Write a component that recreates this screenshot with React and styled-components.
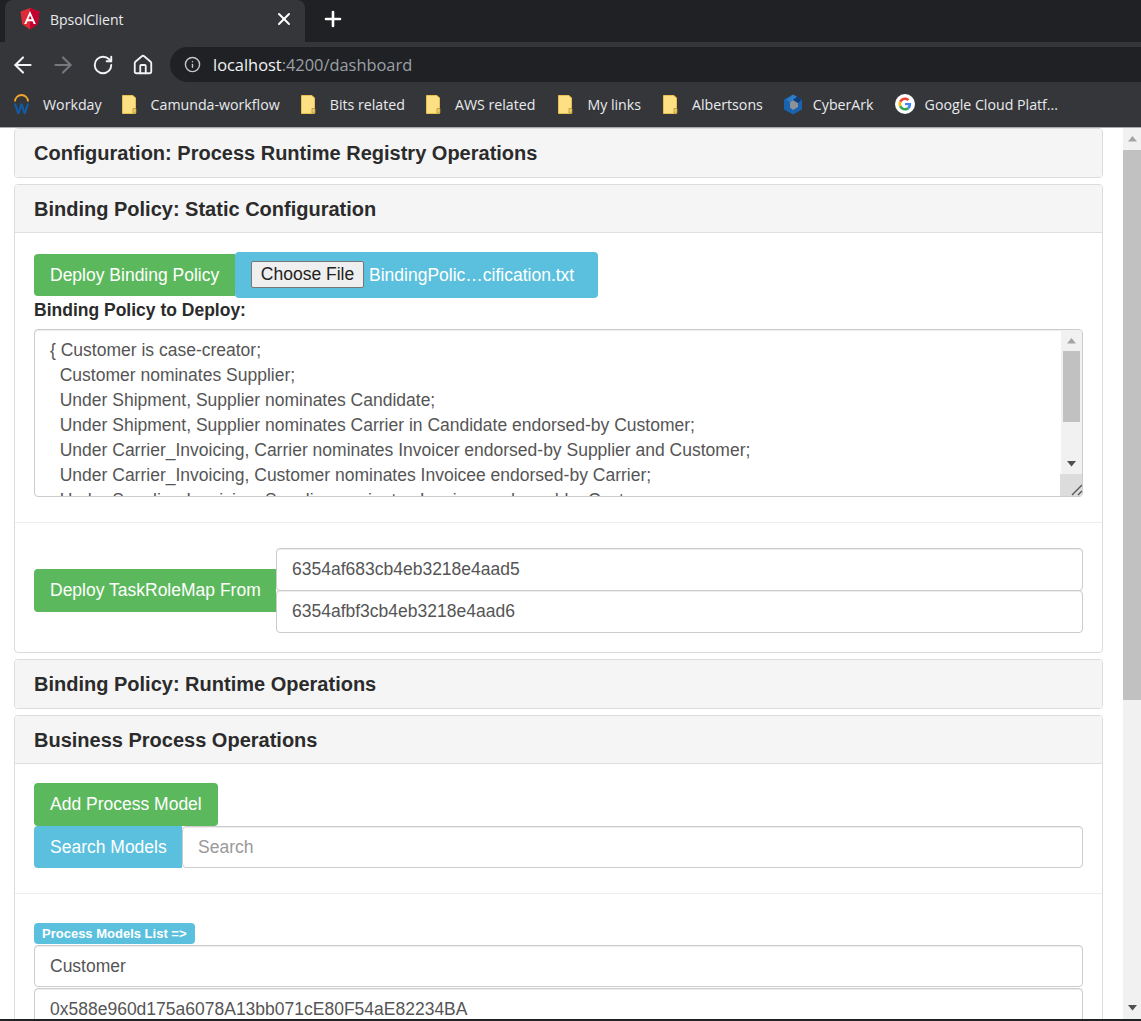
import React from 'react'
import styled, { createGlobalStyle } from 'styled-components'
import { ArrowLeft, ArrowRight, RotateCw, Home, Info, X, Plus } from 'lucide-react'

const GlobalStyle = createGlobalStyle`
    html, body {
        margin: 0;
        padding: 0;
        background: #fff;
        overflow: hidden;
    }
    * {
        box-sizing: border-box;
    }
`

const Window = styled.div`
    width: 1141px;
    height: 1021px;
    display: flex;
    flex-direction: column;
    overflow: hidden;
    font-family: "Liberation Sans", Arial, sans-serif;
    border-bottom: 2px solid #202124;
`

const TabStrip = styled.div`
    height: 42px;
    flex: none;
    background: #202124;
    display: flex;
    align-items: flex-end;
    padding-left: 5px;
`

const Tab = styled.div`
    width: 300px;
    height: 42px;
    background: #35363a;
    border-radius: 8px 8px 0 0;
    display: flex;
    align-items: center;
    padding: 0 11px 4px 15px;
    color: #e8eaed;
    font-family: "Open Sans", sans-serif;
    font-size: 14px;
`

const TabTitle = styled.span`
    flex: 1;
    margin-left: 10px;
`

const NewTab = styled.div`
    padding: 0 0 4px 16px;
    height: 42px;
    display: flex;
    align-items: center;
    color: #fff;
`

const Toolbar = styled.div`
    height: 40px;
    flex: none;
    background: #35363a;
    display: flex;
    align-items: flex-end;
    padding-left: 3px;
`

const NavButtons = styled.div`
    width: 167px;
    height: 35px;
    display: flex;
    align-items: center;
    color: #f1f3f4;
`

const NavButton = styled.div`
    width: 40px;
    display: flex;
    justify-content: center;
    color: ${props => (props.$disabled ? '#75787c' : 'inherit')};
`

const AddressBar = styled.div`
    flex: 1;
    height: 35px;
    background: #202124;
    border-radius: 18px 0 0 18px;
    display: flex;
    align-items: center;
    padding-left: 14px;
    font-family: "Open Sans", sans-serif;
    font-size: 16.4px;
    color: #9aa0a6;
`

const Host = styled.span`
    color: #f1f3f4;
    margin-left: 12px;
`

const BookmarksBar = styled.div`
    height: 46px;
    flex: none;
    background: #35363a;
    border-bottom: 1px solid #a9aaac;
    display: flex;
    align-items: center;
    padding: 0 0 1px 13px;
    font-family: "Open Sans", sans-serif;
    font-size: 14.2px;
    color: #e8eaed;
`

const Bookmark = styled.div`
    display: flex;
    align-items: center;
    gap: ${props => props.$gap || 14}px;
    margin-right: ${props => props.$right || 20}px;
    white-space: nowrap;
`

const Page = styled.div`
    flex: 1;
    min-height: 0;
    display: flex;
    background: #fff;
`

const Content = styled.div`
    flex: 1;
    min-width: 0;
    overflow: hidden;
    padding: 0 20px 0 14px;
`

const Scrollbar = styled.div`
    flex: none;
    width: ${props => props.$width}px;
    background: #f1f1f1;
    display: flex;
    flex-direction: column;
    align-items: stretch;
`

const ScrollArrow = styled.div`
    height: ${props => props.$size}px;
    flex: none;
    display: flex;
    align-items: center;
    justify-content: center;
`

const ScrollThumb = styled.div`
    background: #c1c1c1;
    height: ${props => props.$height}px;
    flex: none;
    margin: 0 ${props => props.$inset || 0}px;
`

const ScrollTrack = styled.div`
    flex: 1;
`

const Card = styled.section`
    border: 1px solid #dcdcdc;
    border-radius: 4px;
    margin-bottom: 6px;
    background: #fff;
`

const CardHeader = styled.h2`
    margin: 0;
    height: 48px;
    padding: 0 19px;
    display: flex;
    align-items: center;
    background: #f5f5f5;
    font-size: 20px;
    font-weight: 700;
    color: #2b2b2b;
    border-radius: 3px;
`

const CardBody = styled.div`
    position: relative;
    margin-top: -1px;
    border-top: 1px solid #dfdfdf;
    padding: 19px;
`

const Row = styled.div`
    display: flex;
    align-items: center;
`

const Button = styled.div`
    height: ${props => props.$height || 42}px;
    width: ${props => props.$width}px;
    flex: none;
    padding: 0 16px;
    display: flex;
    align-items: center;
    font-size: 17.5px;
    color: #fff;
    white-space: nowrap;
    background: ${props => (props.$info ? '#5bc0de' : '#5cb85c')};
    border-radius: ${props => props.$radius || '4px'};
`

const FileBox = styled.div`
    width: 363px;
    height: 46px;
    padding-left: 16px;
    background: #5bc0de;
    border-radius: 4px;
    display: flex;
    align-items: center;
    gap: 5px;
    font-size: 17.5px;
    color: #fff;
    white-space: nowrap;
`

const ChooseFile = styled.div`
    width: 113px;
    height: 27px;
    margin-top: -1px;
    background: #efefef;
    border: 1px solid #767676;
    border-radius: 2px;
    color: #222;
    display: flex;
    align-items: center;
    justify-content: center;
`

const FieldLabel = styled.div`
    margin: 2px 0 8px;
    font-size: 17.5px;
    line-height: 21px;
    font-weight: 700;
    color: #2b2b2b;
`

const TextArea = styled.div`
    height: 168px;
    border: 1px solid #ccc;
    border-radius: 4px;
    display: flex;
    overflow: hidden;
    box-shadow: inset 0 1px 1px rgba(0, 0, 0, 0.075);
`

const TextLines = styled.pre`
    flex: 1;
    margin: 0;
    padding: 8px 15px;
    overflow: hidden;
    font-family: "Liberation Sans", Arial, sans-serif;
    font-size: 17.5px;
    line-height: 25px;
    color: #555;
`

const Grip = styled.div`
    height: 22px;
    flex: none;
    margin: 0 -1px 0 -1px;
    background: #dcdcdc;
    display: flex;
    align-items: flex-end;
    justify-content: flex-end;
`

const Divider = styled.hr`
    margin: 25px -19px;
    border: 0;
    border-top: 1px solid #eee;
`

const InputStack = styled.div`
    flex: 1;
    display: flex;
    flex-direction: column;
`

const Field = styled.div`
    height: ${props => props.$height || 43}px;
    flex: ${props => (props.$grow ? 1 : 'none')};
    margin-top: ${props => props.$offset || 0}px;
    border: 1px solid #ccc;
    border-radius: 4px;
    padding: 0 15px;
    display: flex;
    align-items: center;
    font-size: 17.5px;
    color: ${props => (props.$placeholder ? '#999' : '#555')};
    background: #fff;
    white-space: nowrap;
    overflow: hidden;
    box-shadow: inset 0 1px 1px rgba(0, 0, 0, 0.075);
`

const Badge = styled.div`
    display: inline-flex;
    align-items: center;
    height: 21px;
    padding: 0 8px;
    background: #5bc0de;
    border-radius: 4px;
    color: #fff;
    font-size: 13px;
    font-weight: 700;
    margin-bottom: 1px;
`

const BadgeLine = styled.div`
    display: flex;
    margin-top: 29px;
`

function AngularIcon() {
    return (
        <svg width="20" height="22" viewBox="0 0 20 22">
            <path d="M10 0L0.6 3.4 2.1 16 10 21.6 17.9 16 19.4 3.4Z" fill="#dd2c38" />
            <path d="M10 0V21.6L17.9 16 19.4 3.4Z" fill="#c3002f" />
            <path d="M10 3L4.2 16H6.4L7.5 13.2H12.5L13.6 16H15.8ZM8.3 11.3L10 7.2 11.7 11.3Z" fill="#fff" />
        </svg>
    )
}

function FolderIcon() {
    return (
        <svg width="15" height="19" viewBox="0 0 15 19">
            <path d="M0.5 0.5H11L13.5 3V18.5H0.5Z" fill="#fde084" stroke="#e8c04f" />
            <path d="M11 18V13.5H14V18Z" fill="#f2d271" stroke="#b8942f" strokeWidth="0.8" />
        </svg>
    )
}

function WorkdayIcon() {
    return (
        <svg width="17" height="22" viewBox="0 0 17 22">
            <path d="M2 8.5A6.5 6.5 0 0 1 15 8.5" fill="none" stroke="#f2a52b" strokeWidth="1.8" />
            <path d="M0.8 10.5L4.4 21H6.2L8.5 14.6 10.8 21H12.6L16.2 10.5H14L11.7 17.4 9.4 10.5H7.6L5.3 17.4 3 10.5Z" fill="#0f5ca8" />
        </svg>
    )
}

function CyberArkIcon() {
    return (
        <svg width="20" height="21" viewBox="0 0 20 21">
            <path d="M10 0.5L19 5.5V15.5L10 20.5 1 15.5V5.5Z" fill="#1a62ad" />
            <path d="M10 6L15 9V13L10 16 7 13.5V8Z" fill="#8d9299" />
            <path d="M10 0.5L14 2.8 10 6 7 8 3 6Z" fill="#2d7cc4" />
            <path d="M10 6L15 9 19 5.5 14 2.8Z" fill="#123f78" />
        </svg>
    )
}

function GoogleIcon() {
    return (
        <svg width="20" height="20" viewBox="0 0 48 48">
            <circle cx="24" cy="24" r="24" fill="#fff" />
            <g transform="translate(8.5 8.5) scale(0.645)">
                <path fill="#EA4335" d="M24 9.5c3.5 0 6.7 1.2 9.2 3.6l6.9-6.9C35.9 2.4 30.5 0 24 0 14.6 0 6.5 5.4 2.6 13.2l8 6.2C12.5 13.7 17.8 9.5 24 9.5z" />
                <path fill="#4285F4" d="M46.9 24.5c0-1.6-.1-3.1-.4-4.5H24v9h12.9c-.6 3-2.2 5.5-4.7 7.2l7.7 6c4.5-4.2 7-10.3 7-17.7z" />
                <path fill="#FBBC05" d="M10.5 28.6c-.5-1.4-.8-3-.8-4.6s.3-3.2.8-4.6l-8-6.2C.9 16.5 0 20.1 0 24s.9 7.5 2.6 10.8l7.9-6.2z" />
                <path fill="#34A853" d="M24 48c6.5 0 11.9-2.1 15.9-5.8l-7.7-6c-2.2 1.5-4.9 2.3-8.2 2.3-6.2 0-11.5-4.2-13.4-9.9l-8 6.2C6.5 42.6 14.6 48 24 48z" />
            </g>
        </svg>
    )
}

function Triangle({ down, color }) {
    return (
        <svg width="9" height="6" viewBox="0 0 9 6">
            <path d={down ? 'M0 0H9L4.5 5.5Z' : 'M0 5.5H9L4.5 0Z'} fill={color} />
        </svg>
    )
}

const policyText = `{ Customer is case-creator;
  Customer nominates Supplier;
  Under Shipment, Supplier nominates Candidate;
  Under Shipment, Supplier nominates Carrier in Candidate endorsed-by Customer;
  Under Carrier_Invoicing, Carrier nominates Invoicer endorsed-by Supplier and Customer;
  Under Carrier_Invoicing, Customer nominates Invoicee endorsed-by Carrier;
  Under Supplier_Invoicing, Supplier nominates Invoicer endorsed-by Customer;`

const folders = [
    ['Camunda-workflow', 21],
    ['Bits related', 21],
    ['AWS related', 23],
    ['My links', 22],
    ['Albertsons', 20],
]

export default function App() {
    return (
        <Window>
            <GlobalStyle />
            <TabStrip>
                <Tab>
                    <AngularIcon />
                    <TabTitle>BpsolClient</TabTitle>
                    <X size={20} strokeWidth={2.4} color="#fff" />
                </Tab>
                <NewTab>
                    <Plus size={24} strokeWidth={2.6} />
                </NewTab>
            </TabStrip>
            <Toolbar>
                <NavButtons>
                    <NavButton><ArrowLeft size={26} strokeWidth={1.9} /></NavButton>
                    <NavButton $disabled><ArrowRight size={26} strokeWidth={1.9} /></NavButton>
                    <NavButton><RotateCw size={22} strokeWidth={2.1} /></NavButton>
                    <NavButton><Home size={22} strokeWidth={2} /></NavButton>
                </NavButtons>
                <AddressBar>
                    <Info size={17} strokeWidth={2} color="#c4c7ca" />
                    <Host>localhost</Host>:4200/dashboard
                </AddressBar>
            </Toolbar>
            <BookmarksBar>
                <Bookmark $gap={13} $right={20}>
                    <WorkdayIcon />
                    Workday
                </Bookmark>
                {folders.map(([name, right]) => (
                    <Bookmark key={name} $right={right}>
                        <FolderIcon />
                        {name}
                    </Bookmark>
                ))}
                <Bookmark $gap={10} $right={21}>
                    <CyberArkIcon />
                    CyberArk
                </Bookmark>
                <Bookmark $gap={10}>
                    <GoogleIcon />
                    Google Cloud Platf...
                </Bookmark>
            </BookmarksBar>
            <Page>
                <Content>
                    <Card>
                        <CardHeader>Configuration: Process Runtime Registry Operations</CardHeader>
                    </Card>
                    <Card>
                        <CardHeader>Binding Policy: Static Configuration</CardHeader>
                        <CardBody>
                            <Row>
                                <Button $radius="4px 0 0 4px" $width={201}>Deploy Binding Policy</Button>
                                <FileBox>
                                    <ChooseFile>Choose File</ChooseFile>
                                    BindingPolic…cification.txt
                                </FileBox>
                            </Row>
                            <FieldLabel>Binding Policy to Deploy:</FieldLabel>
                            <TextArea>
                                <TextLines>{policyText}</TextLines>
                                <Scrollbar $width={21}>
                                    <ScrollArrow $size={21}>
                                        <Triangle color="#a3a3a3" />
                                    </ScrollArrow>
                                    <ScrollThumb $height={71} $inset={2} />
                                    <ScrollTrack />
                                    <ScrollArrow $size={21}>
                                        <Triangle down color="#505050" />
                                    </ScrollArrow>
                                    <Grip>
                                        <svg width="14" height="14" viewBox="0 0 14 14">
                                            <path d="M3 13L13 3M9 13L13 9" stroke="#555" strokeWidth="1.4" />
                                        </svg>
                                    </Grip>
                                </Scrollbar>
                            </TextArea>
                            <Divider />
                            <Row>
                                <Button $radius="4px 0 0 4px" $height={43} $width={242}>Deploy TaskRoleMap From</Button>
                                <InputStack>
                                    <Field>6354af683cb4eb3218e4aad5</Field>
                                    <Field $offset={-1}>6354afbf3cb4eb3218e4aad6</Field>
                                </InputStack>
                            </Row>
                        </CardBody>
                    </Card>
                    <Card>
                        <CardHeader>Binding Policy: Runtime Operations</CardHeader>
                    </Card>
                    <Card>
                        <CardHeader>Business Process Operations</CardHeader>
                        <CardBody>
                            <Row>
                                <Button $width={184} $height={43}>Add Process Model</Button>
                            </Row>
                            <Row>
                                <Button $info $radius="4px 0 0 4px" $width={148}>Search Models</Button>
                                <Field $grow $height={42} $placeholder>Search</Field>
                            </Row>
                            <Divider />
                            <BadgeLine>
                                <Badge>Process Models List =&gt;</Badge>
                            </BadgeLine>
                            <Field $height={42}>Customer</Field>
                            <Field $height={42} $offset={1}>0x588e960d175a6078A13bb071cE80F54aE82234BA</Field>
                        </CardBody>
                    </Card>
                </Content>
                <Scrollbar $width={18}>
                    <ScrollArrow $size={22}>
                        <Triangle color="#a3a3a3" />
                    </ScrollArrow>
                    <ScrollThumb $height={550} />
                    <ScrollTrack />
                    <ScrollArrow $size={22}>
                        <Triangle down color="#505050" />
                    </ScrollArrow>
                </Scrollbar>
            </Page>
        </Window>
    )
}
